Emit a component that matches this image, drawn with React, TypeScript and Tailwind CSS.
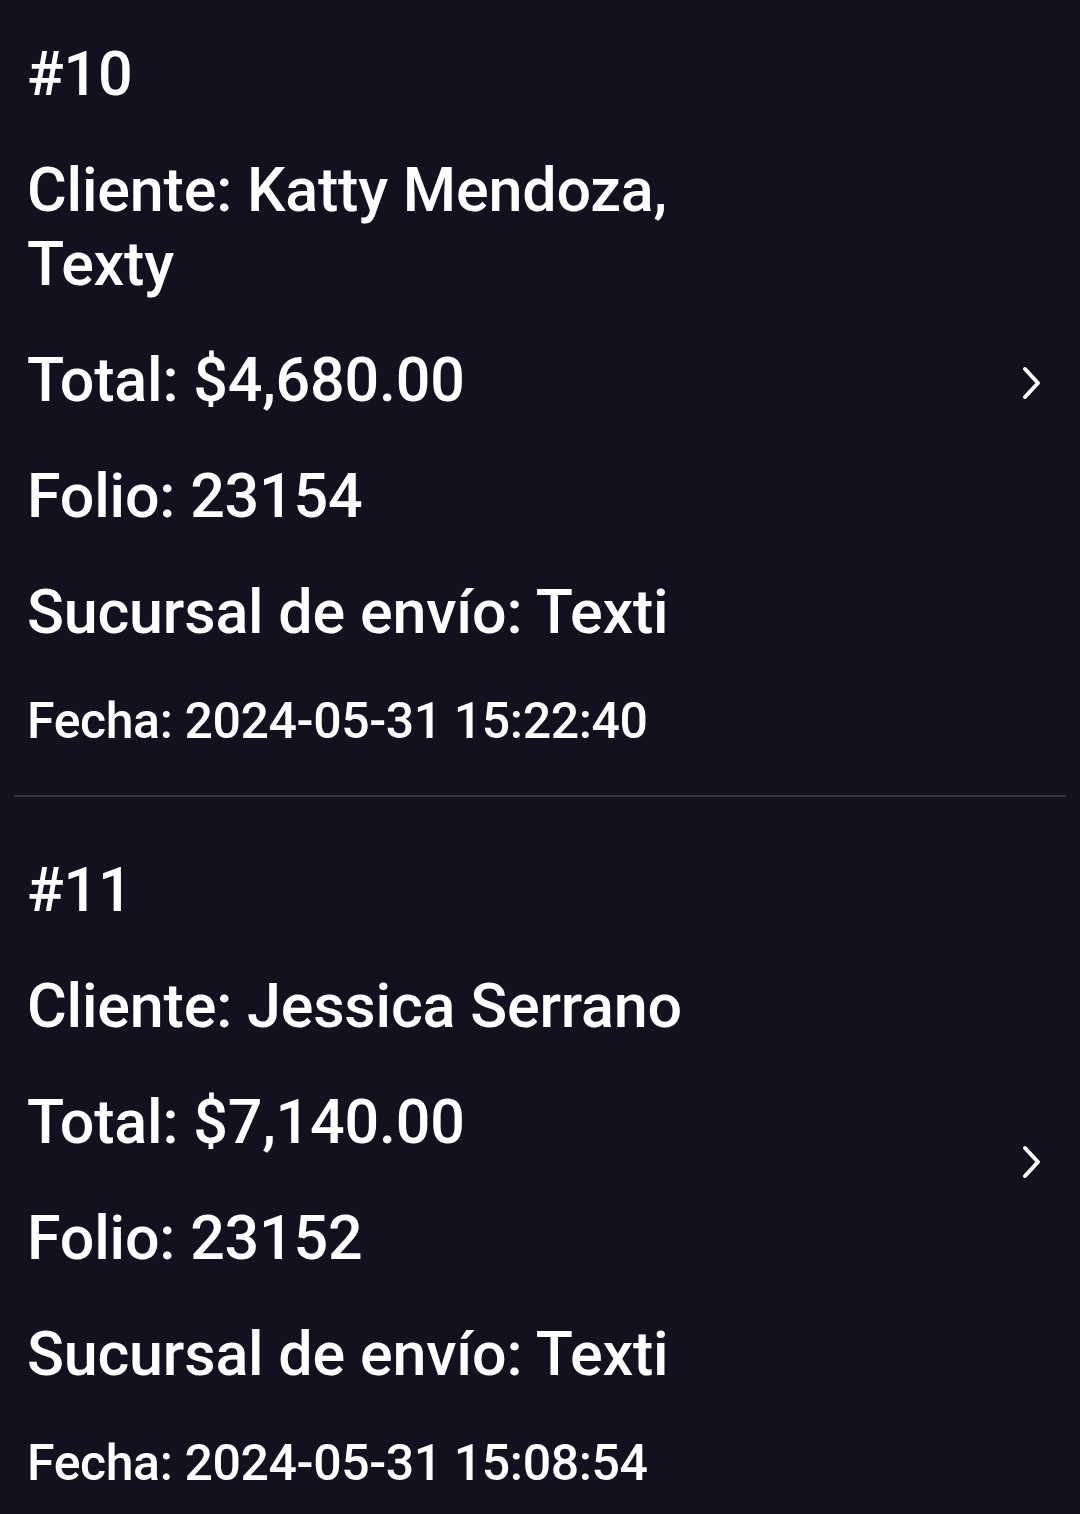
const orders = [
  {
    num: 10,
    cliente: 'Katty Mendoza, Texty',
    total: '$4,680.00',
    folio: '23154',
    sucursal: 'Texti',
    fecha: '2024-05-31 15:22:40',
  },
  {
    num: 11,
    cliente: 'Jessica Serrano',
    total: '$7,140.00',
    folio: '23152',
    sucursal: 'Texti',
    fecha: '2024-05-31 15:08:54',
  },
];

function Chevron() {
  return (
    <svg width="22" height="34" viewBox="0 0 22 34" fill="none" className="shrink-0 mb-[23px]">
      <polyline points="4,3 17,17 4,31" stroke="white" strokeWidth="4" strokeLinecap="round" strokeLinejoin="round" />
    </svg>
  );
}

export default function App() {
  return (
    <div className="min-h-screen bg-[#121120] text-white font-medium overflow-hidden" style={{ fontFamily: 'Roboto, "Noto Sans", sans-serif' }}>
      {orders.map((o, i) => (
        <div key={o.num}>
          {i > 0 && <div className="mx-[14px] h-[2px] bg-[#34343f]" />}
          <div className={`flex items-center pl-[27px] pr-[37px] pb-[43px] ${i === 0 ? 'pt-[37px]' : 'pt-[56px]'}`}>
            <div className="flex flex-col gap-[42px] w-[700px] text-[61px] leading-[74px] tracking-[-0.2px]">
              <p>#{o.num}</p>
              <p>Cliente: {o.cliente}</p>
              <p>Total: {o.total}</p>
              <p>Folio: {o.folio}</p>
              <p>Sucursal de envío: {o.sucursal}</p>
              <p className="text-[50px] leading-[61px] tracking-[-0.4px]">Fecha: {o.fecha}</p>
            </div>
            <div className="flex-1" />
            <Chevron />
          </div>
        </div>
      ))}
    </div>
  );
}
